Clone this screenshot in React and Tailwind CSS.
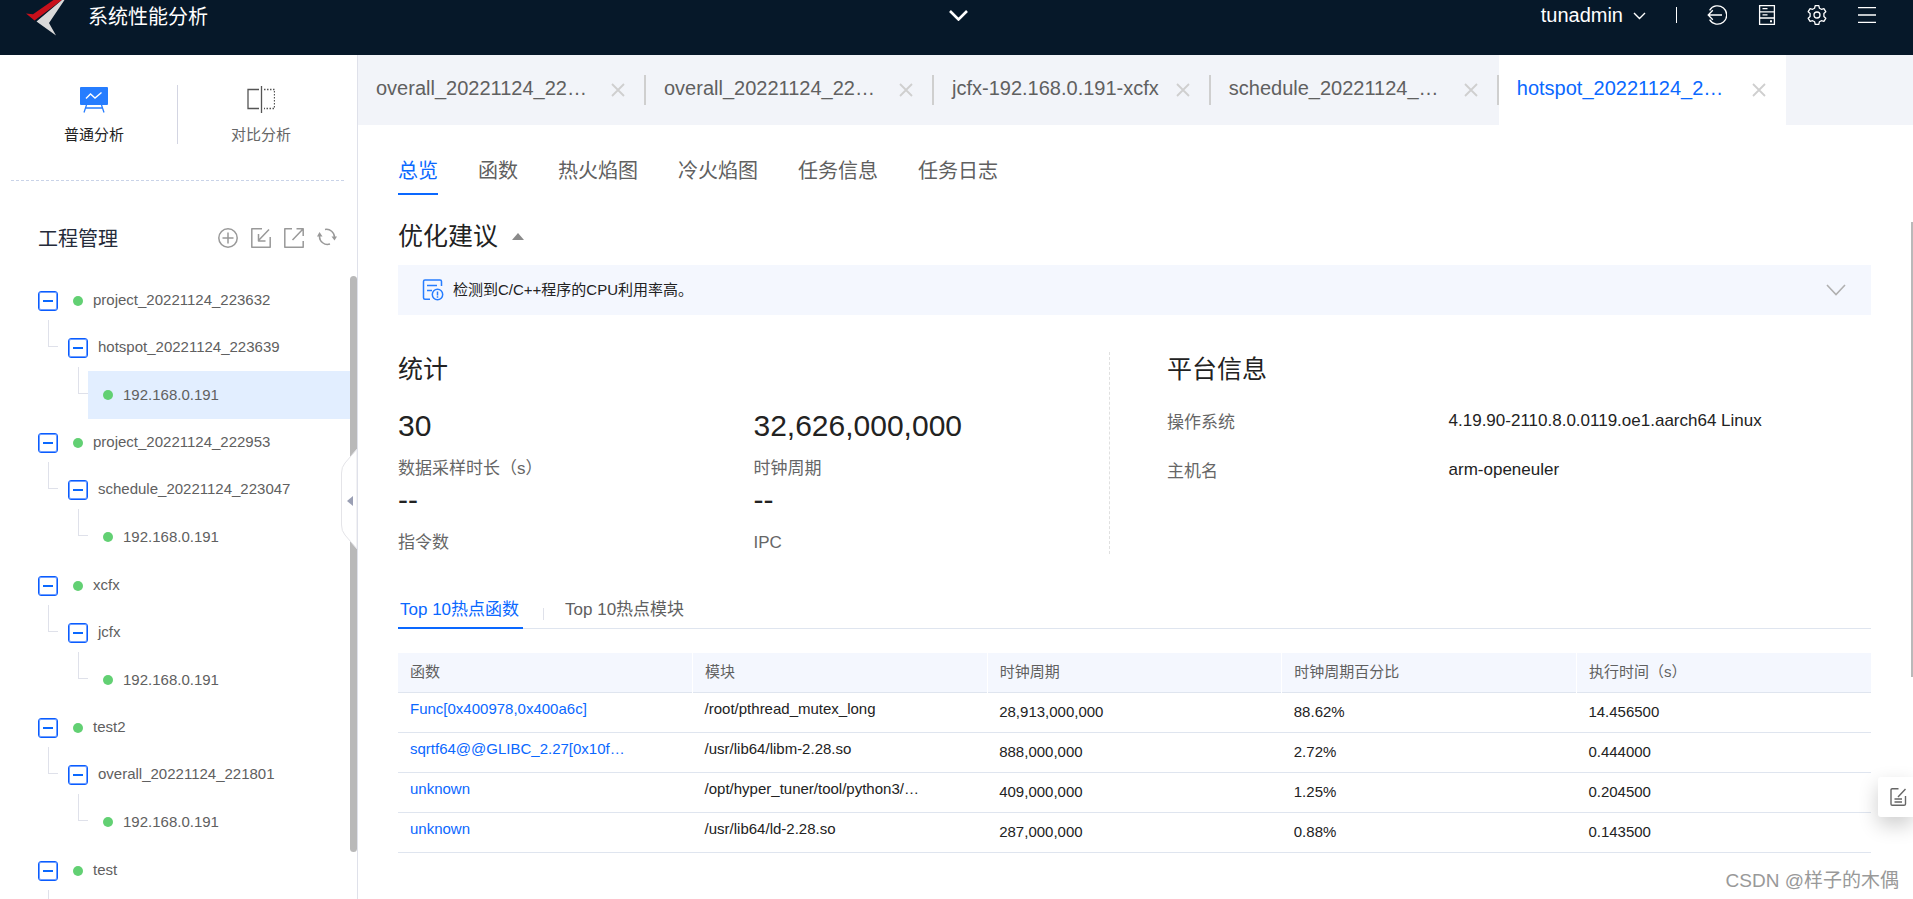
import React from "react";

const projects = [
  { name: "project_20221124_223632", task: "hotspot_20221124_223639", node: "192.168.0.191", selected: true },
  { name: "project_20221124_222953", task: "schedule_20221124_223047", node: "192.168.0.191" },
  { name: "xcfx", task: "jcfx", node: "192.168.0.191" },
  { name: "test2", task: "overall_20221124_221801", node: "192.168.0.191" },
  { name: "test" },
];

const openTabs = [
  { title: "overall_20221124_22…", wide: true },
  { title: "overall_20221124_22…", wide: true },
  { title: "jcfx-192.168.0.191-xcfx" },
  { title: "schedule_20221124_…", wide: true },
];

const views = ["总览", "函数", "热火焰图", "冷火焰图", "任务信息", "任务日志"];

const hotRows = [
  ["Func[0x400978,0x400a6c]", "/root/pthread_mutex_long", "28,913,000,000", "88.62%", "14.456500"],
  ["sqrtf64@@GLIBC_2.27[0x10f…", "/usr/lib64/libm-2.28.so", "888,000,000", "2.72%", "0.444000"],
  ["unknown", "/opt/hyper_tuner/tool/python3/…", "409,000,000", "1.25%", "0.204500"],
  ["unknown", "/usr/lib64/ld-2.28.so", "287,000,000", "0.88%", "0.143500"],
];

function Logo() {
  return (
    <svg width="40" height="36" viewBox="0 0 40 36" aria-hidden="true">
      <path d="M0 13.500l7 .8L27.500 0h8.500L8.500 20.500z" fill="#c8101b" />
      <path d="M38.500 0L36 0 10.500 21.500 30 35.500 23 23z" fill="#d9d9d9" />
    </svg>
  );
}

function Chevron({ className, width, height, stroke }) {
  return (
    <svg className={className} width={width} height={height} viewBox={`0 0 ${width} ${height}`} fill="none" stroke="currentColor" strokeWidth={stroke} aria-hidden="true">
      <path d={`M1 1L${width / 2} ${height - 1.5}L${width - 1} 1`} />
    </svg>
  );
}

function Header() {
  return (
    <header className="flex h-[55px] shrink-0 items-start bg-[#061829] text-white">
      <div className="flex flex-1 items-start">
        <div className="ml-[26px]"><Logo /></div>
        <h1 className="ml-[22px] pt-[2px] text-[20px] leading-[30px]">系统性能分析</h1>
      </div>
      <button type="button" aria-label="展开" className="ml-10 mt-[10px]">
        <Chevron width={19} height={11} stroke={2.6} />
      </button>
      <div className="flex h-[30px] flex-1 items-center justify-end pr-9">
        <button type="button" className="flex items-center gap-[10px] text-[20px] leading-[30px]">
          tunadmin
          <Chevron className="mt-[2px]" width={13} height={8} stroke={1.4} />
        </button>
        <span className="ml-[30px] h-4 w-px bg-white" />
        <div className="ml-[30px] flex items-center gap-[30px]">
          <button type="button" aria-label="退出" className="h-5 w-5">
            <svg width="20" height="20" viewBox="0 0 20 20" fill="none" stroke="currentColor" strokeWidth="1.300">
              <path d="M2.600 5.300A9.200 9.200 0 1 1 2.600 14.700M15 10H1.200M5.800 5.200L1.200 10l4.600 4.800" />
            </svg>
          </button>
          <button type="button" aria-label="服务器" className="h-5 w-5">
            <svg width="20" height="20" viewBox="0 0 20 20" fill="none" stroke="currentColor" strokeWidth="1.300">
              <path d="M2.600.700h14.800v18.600H2.600zM2.600 6.800h14.800M2.600 13h14.800M5.500 3.700h5M5.500 9.900h5" />
              <path d="M13 16.200h2" strokeWidth="2" />
            </svg>
          </button>
          <button type="button" aria-label="设置" className="h-5 w-5">
            <svg width="20" height="20" viewBox="0 0 20 20" fill="none" stroke="currentColor" strokeWidth="1.300" strokeLinejoin="round">
              <path d="M8.200.700h3.600l.6 2.500 2 1.100 2.500-.700 1.900 3.100-1.900 1.800v3l1.900 1.800-1.900 3.100-2.500-.700-2 1.100-.6 2.500H8.200l-.6-2.500-2-1.100-2.500.700-1.900-3.100 1.900-1.800v-3L1.200 6.700l1.900-3.100 2.500.700 2-1.100z" />
              <circle cx="10" cy="10" r="3" />
            </svg>
          </button>
          <button type="button" aria-label="菜单" className="h-5 w-5">
            <svg width="20" height="20" viewBox="0 0 20 20" fill="none" stroke="currentColor" strokeWidth="1.300">
              <path d="M1 2.700h18M1 10h18M1 17.300h18" />
            </svg>
          </button>
        </div>
      </div>
    </header>
  );
}

function Toggle() {
  return (
    <button type="button" aria-label="收起" className="flex h-5 w-5 shrink-0 items-center justify-center rounded-[3px] border border-[#0a5cff] ring-1 ring-inset ring-[#0a5cff]/60">
      <span className="h-[2px] w-[10px] bg-[#0a68ff]" />
    </button>
  );
}

function Dot() {
  return <span className="h-[10px] w-[10px] shrink-0 rounded-full bg-[#62d073]" />;
}

function Elbow() {
  return <span className="-mt-1 h-[27px] w-[10px] shrink-0 self-start border-b border-l border-[#dfe1ea]" />;
}

function Sidebar() {
  return (
    <aside className="relative flex w-[358px] shrink-0 flex-col border-r border-[#dfe1ea] bg-white">
      <div className="ml-[11px] mr-[13px] flex h-[126px] shrink-0 items-start border-b border-dashed border-[#c9d3e8] pt-[30px]">
        <button type="button" className="flex flex-1 flex-col items-center text-[15px] leading-[22px] text-[#222]">
          <svg className="mt-[2px]" width="28" height="26" viewBox="0 0 28 26" fill="none" aria-hidden="true">
            <rect width="28" height="18" rx="1" fill="#267dff" />
            <path d="M6 11.500l4.500-4.500 4.500 4 6.500-5.500" stroke="#fff" strokeWidth="1.400" />
            <path d="M6.500 18L4 25.500M21.500 18L24 25.500M6 21h16" stroke="#267dff" strokeWidth="1.300" />
          </svg>
          <span className="mt-[11px]">普通分析</span>
        </button>
        <span className="h-[59px] w-px bg-[#d3d5e2]" />
        <button type="button" className="flex flex-1 flex-col items-center text-[15px] leading-[22px] text-[#666]">
          <svg width="28" height="28" viewBox="0 0 28 28" fill="none" stroke="#555" aria-hidden="true">
            <path d="M12 4.500H1v19h11" strokeWidth="1.300" />
            <path d="M14.500 1v27" strokeWidth="1.300" />
            <path d="M17 4.500h10.500v19H17" strokeWidth="1.300" strokeDasharray="1.500 1.500" />
          </svg>
          <span className="mt-[11px]">对比分析</span>
        </button>
      </div>
      <div className="mt-[42px] flex h-[30px] shrink-0 items-center justify-between pl-[38px] pr-5">
        <h2 className="pt-[2px] text-[20px] leading-[30px] text-[#252b3a]">工程管理</h2>
        <div className="flex gap-[13px] text-[#999]">
          <button type="button" aria-label="新建" className="h-5 w-5">
            <svg width="20" height="20" viewBox="0 0 20 20" fill="none" stroke="currentColor" strokeWidth="1.500">
              <circle cx="10" cy="10" r="9.200" />
              <path d="M10 4.500v11M4.500 10h11" />
            </svg>
          </button>
          <button type="button" aria-label="导入" className="h-5 w-5">
            <svg width="20" height="20" viewBox="0 0 20 20" fill="none" stroke="currentColor" strokeWidth="1.500" strokeLinejoin="round">
              <path d="M11 .800H.800v18.400h18.400V9M18 1.500L7.500 12.500M7.500 6v7h7" />
            </svg>
          </button>
          <button type="button" aria-label="导出" className="h-5 w-5">
            <svg width="20" height="20" viewBox="0 0 20 20" fill="none" stroke="currentColor" strokeWidth="1.500" strokeLinejoin="round">
              <path d="M8 .800H.800v18.400h18.400V13M8.500 12L19 1M12.500.800h6.700V8" />
            </svg>
          </button>
          <button type="button" aria-label="刷新" className="h-5 w-5">
            <svg width="20" height="20" viewBox="0 0 20 20" fill="none" stroke="currentColor" strokeWidth="1.500">
              <path d="M8 1.500A8 8 0 0 1 17.500 9.500M13 16A8 8 0 0 1 2.500 8" />
              <path d="M14.500 8.500h5.500l-2.500 4zM0 8.500h5.500l-3-4.500z" fill="currentColor" stroke="none" />
            </svg>
          </button>
        </div>
      </div>
      <div className="min-h-0 flex-1 overflow-hidden pt-6 text-[15px] text-[#606060]">
        <ul>
          {projects.map((p) => (
            <li key={p.name} className="even:pb-px">
              <div className="flex h-[47px] items-center pl-[38px]">
                <Toggle />
                <span className="ml-[15px] flex items-center gap-[10px]"><Dot />{p.name}</span>
              </div>
              <div className="flex h-[47px] items-center pl-12">
                <Elbow />
                {p.task && <span className="ml-[10px] flex items-center gap-[10px]"><Toggle />{p.task}</span>}
              </div>
              {p.node && (
                <div className="flex h-12 items-center pl-[78px] pr-[7px]">
                  <Elbow />
                  <button type="button" className={p.selected ? "flex h-12 flex-1 items-center gap-[10px] bg-[#e2eeff] pl-[15px]" : "flex h-12 flex-1 items-center gap-[10px] pl-[15px]"}>
                    <Dot />{p.node}
                  </button>
                </div>
              )}
            </li>
          ))}
        </ul>
      </div>
      <span className="absolute right-0 top-[221px] h-[576px] w-[7px] rounded-full bg-[#b9b9b9]" />
      <button type="button" aria-label="收起侧栏" className="absolute right-0 top-[394px] h-[100px] w-[18px]">
        <svg width="18" height="100" viewBox="0 0 18 100" fill="none">
          <path d="M18 0L6 14Q2.500 18 2.500 24v52q0 6 3.500 10L18 100z" fill="#fff" stroke="#e4e4e8" />
          <path d="M14 47v10l-6-5z" fill="#9a9fb4" />
        </svg>
      </button>
    </aside>
  );
}

function CloseIcon() {
  return (
    <svg width="14" height="14" viewBox="0 0 14 14" fill="none" stroke="#cfcfcf" strokeWidth="1.800" aria-hidden="true">
      <path d="M1 1l12 12M13 1L1 13" />
    </svg>
  );
}

function TabStrip() {
  return (
    <nav className="flex h-[70px] shrink-0 bg-[#f2f4f9] text-[20px] leading-[30px] text-[#606060]">
      {openTabs.map((t, i) => (
        <div key={i} className="flex items-center pb-1 pl-[18px]">
          <button type="button" className={t.wide ? "w-[218px] text-left" : "text-left"}>{t.title}</button>
          <button type="button" aria-label="关闭" className="ml-[17px] mr-[19px] mt-1"><CloseIcon /></button>
          <span className="mt-1 h-[30px] w-[2px] bg-[#cfcfcf]" />
        </div>
      ))}
      <div className="flex w-[287px] items-center bg-white pb-1 pl-[18px]">
        <button type="button" className="w-[218px] text-left text-[#0a68ff]">hotspot_20221124_2…</button>
        <button type="button" aria-label="关闭" className="ml-[17px] mt-1"><CloseIcon /></button>
      </div>
    </nav>
  );
}

function Advice() {
  return (
    <section>
      <h2 className="mt-[22px] flex items-center gap-[14px] text-[25px] leading-[38px] text-[#222]">
        优化建议
        <svg width="12" height="7" viewBox="0 0 12 7" aria-hidden="true"><path d="M6 0l6 7H0z" fill="#8a8a8a" /></svg>
      </h2>
      <div className="mt-[10px] flex h-[50px] items-center bg-[#f4f7fe] pl-6 pr-[25px] text-[15px] text-[#222]">
        <svg width="22" height="22" viewBox="0 0 22 22" fill="none" stroke="#267dff" strokeWidth="1.500" aria-hidden="true">
          <path d="M8 20.300H3q-1.500 0-1.500-1.500V2.500Q1.500 1 3 1h15q1.500 0 1.500 1.500V7M5 6.500h10M5 11.500h5" />
          <circle cx="15.500" cy="15.500" r="5.200" />
          <path d="M15.500 12.500v4M15.500 17.300v1.400" />
        </svg>
        <span className="ml-[9px] flex-1">检测到C/C++程序的CPU利用率高。</span>
        <button type="button" aria-label="展开建议" className="text-[#b0b0b0]">
          <Chevron width={20} height={12} stroke={1.6} />
        </button>
      </div>
    </section>
  );
}

function Stat({ value, label }) {
  return (
    <div>
      <dd className="text-[30px] leading-[42px] text-[#222]">{value}</dd>
      <dt className="mt-3 text-[17px] leading-5 text-[#666]">{label}</dt>
    </div>
  );
}

function Summary() {
  return (
    <section className="mt-[37px] grid h-[202px] grid-cols-[29fr_31fr]">
      <div className="border-r border-dashed border-[#e0e0e0]">
        <h2 className="text-[25px] leading-[34px] text-[#222]">统计</h2>
        <dl className="mt-[19px] grid grid-cols-2">
          <Stat value="30" label="数据采样时长（s）" />
          <Stat value="32,626,000,000" label="时钟周期" />
          <Stat value="--" label="指令数" />
          <Stat value="--" label="IPC" />
        </dl>
      </div>
      <div className="pl-[57px]">
        <h2 className="text-[25px] leading-[34px] text-[#222]">平台信息</h2>
        <dl className="mt-[20px] grid grid-cols-[2fr_3fr] gap-y-[15px] text-[17px]">
          <dt className="leading-[34px] text-[#666]">操作系统</dt>
          <dd className="leading-[30px] text-[#222]">4.19.90-2110.8.0.0119.oe1.aarch64 Linux</dd>
          <dt className="leading-[34px] text-[#666]">主机名</dt>
          <dd className="leading-[30px] text-[#222]">arm-openeuler</dd>
        </dl>
      </div>
    </section>
  );
}

function HotTable() {
  return (
    <section className="mt-[36px]">
      <div className="flex h-[39px] items-start border-b border-[#dfe5ef] text-[17px] leading-10 text-[#606060]">
        <button type="button" className="h-[39px] border-b-2 border-[#0a68ff] pl-[2px] pr-1 leading-10 text-[#0a68ff]">Top 10热点函数</button>
        <span className="ml-5 mt-[18px] h-3 w-px bg-[#dfe1ea]" />
        <button type="button" className="ml-[21px] leading-10">Top 10热点模块</button>
      </div>
      <table className="mt-6 w-full table-fixed text-left text-[15px] leading-6">
        <thead>
          <tr className="h-[39px] border-b border-[#dfe5ef] bg-[#f4f7fe] text-[#606060]">
            {["函数", "模块", "时钟周期", "时钟周期百分比", "执行时间（s）"].map((h) => (
              <th key={h} className="border-r border-white pl-3 font-normal last:border-r-0">{h}</th>
            ))}
          </tr>
        </thead>
        <tbody className="text-[#222]">
          {hotRows.map((r, i) => (
            <tr key={i} className="h-10 border-b border-[#dfe5ef]">
              <td className="truncate pb-[6px] pl-3"><a href="#function" className="text-[#0a68ff]">{r[0]}</a></td>
              <td className="truncate pb-[6px] pl-3">{r[1]}</td>
              <td className="pl-3">{r[2]}</td>
              <td className="pl-3">{r[3]}</td>
              <td className="pl-3">{r[4]}</td>
            </tr>
          ))}
        </tbody>
      </table>
    </section>
  );
}

export default function App() {
  return (
    <div className="relative flex h-screen flex-col overflow-hidden bg-white font-['Liberation_Sans','Noto_Sans_CJK_SC',sans-serif]">
      <Header />
      <div className="flex min-h-0 flex-1">
        <Sidebar />
        <main className="flex min-w-0 flex-1 flex-col">
          <TabStrip />
          <div className="pl-10 pr-[42px]">
            <nav className="flex gap-10 pt-[28px] text-[20px] leading-9 text-[#606060]">
              {views.map((v, i) => (
                <button type="button" key={v} className={i === 0 ? "h-[42px] border-b-2 border-[#0a68ff] pb-1 text-[#0a68ff]" : "h-[42px] pb-[6px]"}>{v}</button>
              ))}
            </nav>
            <Advice />
            <Summary />
            <HotTable />
          </div>
        </main>
      </div>
      <span className="absolute right-0 top-[222px] h-[455px] w-[2px] bg-[#b9b9b9]" />
      <button type="button" aria-label="反馈" className="absolute right-0 top-[777px] flex h-10 w-[35px] items-center rounded-l-[3px] bg-white pl-3 shadow-[0_8px_20px_rgba(0,0,0,0.2)]">
        <svg width="17" height="20" viewBox="0 0 17 20" fill="none" stroke="#666" strokeWidth="1.400" strokeLinejoin="round" aria-hidden="true">
          <path d="M8.500 1.700H2.200Q1 1.700 1 3v14q0 1.300 1.200 1.300H14q1.500 0 1.500-1.300V9M15.500 2L8 10M4.500 12h7.500M4.500 15h7.500" />
        </svg>
      </button>
      <span className="absolute bottom-[3px] right-[14px] text-[19px] leading-[30px] text-[#999]">CSDN @样子的木偶</span>
    </div>
  );
}
